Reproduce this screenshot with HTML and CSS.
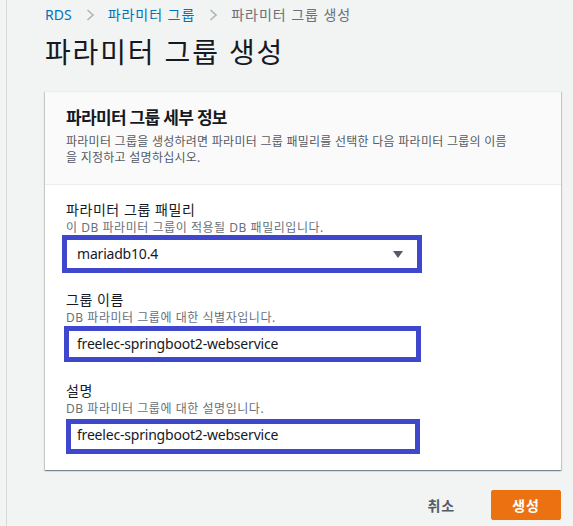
FILE: index.html
```html
<!DOCTYPE html>
<html lang="ko">
<head>
<meta charset="utf-8">
<title>파라미터 그룹 생성</title>
<link rel="stylesheet" href="styles.css">
</head>
<body>
<div class="page">
  <nav class="breadcrumb">
    <a class="crumb-link latin" href="#">RDS</a>
    <svg class="chevron" width="9" height="12" viewBox="0 0 9 12"><polyline points="1.5,1 7,6 1.5,11" fill="none" stroke="#aab7b8" stroke-width="1.6"/></svg>
    <a class="crumb-link" href="#">파라미터 그룹</a>
    <svg class="chevron" width="9" height="12" viewBox="0 0 9 12"><polyline points="1.5,1 7,6 1.5,11" fill="none" stroke="#aab7b8" stroke-width="1.6"/></svg>
    <span class="crumb-current">파라미터 그룹 생성</span>
  </nav>

  <h1 class="page-title">파라미터 그룹 생성</h1>

  <section class="card">
    <header class="card-header">
      <h2 class="card-title">파라미터 그룹 세부 정보</h2>
      <p class="card-desc">파라미터 그룹을 생성하려면 파라미터 그룹 패밀리를 선택한 다음 파라미터 그룹의 이름<br>을 지정하고 설명하십시오.</p>
    </header>
    <div class="card-body">
      <div class="field">
        <div class="field-label">파라미터 그룹 패밀리</div>
        <div class="field-desc">이 DB 파라미터 그룹이 적용될 DB 패밀리입니다.</div>
        <div class="control">
          <div class="input select">
            <span>mariadb10.4</span>
            <svg class="caret" width="10" height="7" viewBox="0 0 10 7"><polygon points="0,0 10,0 5,7" fill="#545b64"/></svg>
          </div>
          <div class="annot annot-1"></div>
        </div>
      </div>

      <div class="field">
        <div class="field-label">그룹 이름</div>
        <div class="field-desc">DB 파라미터 그룹에 대한 식별자입니다.</div>
        <div class="control">
          <div class="input">freelec-springboot2-webservice</div>
          <div class="annot annot-2"></div>
        </div>
      </div>

      <div class="field">
        <div class="field-label">설명</div>
        <div class="field-desc">DB 파라미터 그룹에 대한 설명입니다.</div>
        <div class="control">
          <div class="input">freelec-springboot2-webservice</div>
          <div class="annot annot-3"></div>
        </div>
      </div>
    </div>
  </section>

  <footer class="actions">
    <button class="btn-cancel">취소</button>
    <button class="btn-primary">생성</button>
  </footer>
</div>
</body>
</html>
```
FILE: styles.css
```css
* { box-sizing: border-box; }

html, body {
  margin: 0;
  padding: 0;
  background: #f2f3f3;
}

body {
  font-family: "Noto Sans", "Noto Sans CJK KR", sans-serif;
  color: #16191f;
  width: 573px;
  height: 526px;
  overflow: hidden;
  letter-spacing: 0.06em;
}

.latin {
  letter-spacing: 0;
}

.page {
  margin-left: 6px;
  border-left: 1px solid #d5dbdb;
  min-height: 526px;
  padding: 5px 12px 0 38px;
}

.breadcrumb {
  display: flex;
  align-items: center;
  height: 20px;
  font-size: 14px;
  line-height: 20px;
}

.crumb-link {
  color: #0073bb;
  text-decoration: none;
}

.crumb-current {
  color: #687078;
}

.chevron {
  margin: 0 13px 0 14px;
  flex: none;
}

.page-title {
  margin: 9px 0 21px;
  font-size: 28px;
  line-height: 36px;
  font-weight: 400;
  letter-spacing: 0.066em;
  color: #16191f;
}

.card {
  width: 516px;
  background: #ffffff;
  box-shadow: 0 1px 1px 0 rgba(0, 28, 36, 0.3), 1px 1px 1px 0 rgba(0, 28, 36, 0.15), -1px 1px 1px 0 rgba(0, 28, 36, 0.15);
  border-top: 1px solid #eaeded;
}

.card-header {
  background: #fafafa;
  border-bottom: 1px solid #eaeded;
  padding: 14px 20px 18px 21px;
}

.card-title {
  margin: 0;
  font-size: 17px;
  line-height: 24px;
  font-weight: 700;
  letter-spacing: -0.04em;
  color: #16191f;
}

.card-desc {
  margin: 4px 0 0;
  font-size: 12px;
  line-height: 16px;
  letter-spacing: 0.022em;
  color: #545b64;
}

.card-body {
  padding: 15px 20px 20px 21px;
}

.field + .field {
  margin-top: 21px;
}

.field:last-child {
  margin-top: 22px;
}

.field-label {
  font-size: 14px;
  line-height: 20px;
  letter-spacing: 0.04em;
  color: #16191f;
}

.field-desc {
  font-size: 12px;
  line-height: 16px;
  letter-spacing: 0.045em;
  color: #687078;
}

.control {
  position: relative;
  margin-top: 3px;
  width: 352px;
}

.input {
  height: 30px;
  border: 1px solid #aab7b8;
  background: #ffffff;
  padding: 0 10px;
  font-size: 14px;
  line-height: 28px;
  color: #16191f;
  white-space: nowrap;
  letter-spacing: -0.2px;
}

.select {
  display: flex;
  align-items: center;
  justify-content: space-between;
  padding-right: 14px;
}

.caret {
  flex: none;
  margin-top: 1px;
}

.annot {
  position: absolute;
  border: 5px solid #3f48cc;
  pointer-events: none;
}

.annot-1 { top: -4px; bottom: -4px; left: -4px; right: -4px; }
.annot-2 { top: -3px; bottom: -3px; left: -2px; right: -3px; }
.annot-3 { top: -1px; bottom: -4px; left: 0; right: -2px; }

.actions {
  display: flex;
  justify-content: flex-end;
  align-items: center;
  width: 516px;
  margin-top: 20px;
  gap: 16px;
}

.btn-cancel {
  background: none;
  border: none;
  padding: 0 20px;
  height: 30px;
  font-family: inherit;
  font-size: 14px;
  font-weight: 700;
  letter-spacing: 0.06em;
  color: #545b64;
}

.btn-primary {
  background: #ec7211;
  border: 1px solid #ec7211;
  border-radius: 2px;
  padding: 0;
  height: 30px;
  width: 70px;
  font-family: inherit;
  font-size: 14px;
  font-weight: 700;
  letter-spacing: 0.06em;
  color: #ffffff;
}
```
